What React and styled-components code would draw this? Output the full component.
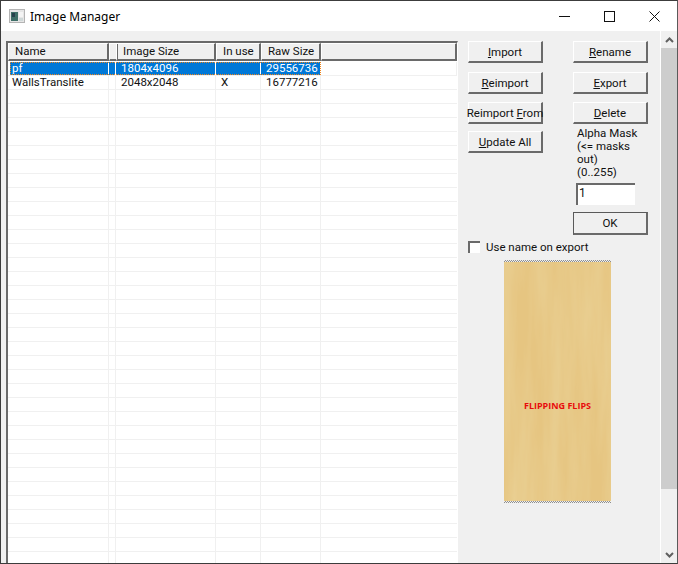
import React from 'react'
import styled, { createGlobalStyle } from 'styled-components'

const UI_FONT = '"Roboto", "Liberation Sans", sans-serif'

const GlobalStyle = createGlobalStyle`
  html, body {
    margin: 0;
    padding: 0;
    background: #f0f0f0;
  }
`

const Window = styled.div`
  width: 678px;
  height: 564px;
  box-sizing: border-box;
  border: 1px solid #3c3c3c;
  border-right-color: #5a5a5a;
  display: flex;
  flex-direction: column;
  overflow: hidden;
  font-family: ${UI_FONT};
  font-size: 11.5px;
  color: #111;
`

const TitleBar = styled.div`
  height: 30px;
  flex: none;
  background: #fff;
  display: flex;
  align-items: center;
  padding-left: 8px;
`

const TitleText = styled.span`
  margin-left: 5px;
  font-family: "Noto Sans", sans-serif;
  font-size: 12px;
  color: #000;
`

const Caption = styled.div`
  margin-left: auto;
  display: flex;
`

const CaptionButton = styled.div`
  width: 45px;
  height: 30px;
  display: flex;
  align-items: center;
  justify-content: center;
`

const Body = styled.div`
  flex: 1;
  min-height: 0;
  display: flex;
  background: #f0f0f0;
`

const ListFrame = styled.div`
  width: 452px;
  margin: 10px 0 0 5px;
  flex: none;
  box-sizing: border-box;
  border-top: 2px solid #6a6a6a;
  border-left: 2px solid #6a6a6a;
  border-right: 1px solid #fff;
  background: #fff;
  overflow: hidden;
`

const COLUMNS = '101px 7px 100px 45px 60px 1fr'

const HeaderRow = styled.div`
  display: grid;
  grid-template-columns: ${COLUMNS};
  height: 18px;
  background: #f0f0f0;
`

const HeaderCell = styled.div`
  box-sizing: border-box;
  border-top: 1px solid #fff;
  border-left: 1px solid #fff;
  border-right: 2px solid #6a6a6a;
  border-bottom: 2px solid #6a6a6a;
  padding-left: 6px;
  line-height: 15px;
  white-space: nowrap;
  overflow: hidden;
`

const Rows = styled.div`
  margin-top: 1px;
`

const Row = styled.div`
  position: relative;
  display: grid;
  grid-template-columns: ${COLUMNS};
  height: 14px;
  box-sizing: border-box;
  border-bottom: 1px solid #f0f0f0;
`

const Cell = styled.div`
  box-sizing: border-box;
  padding-left: 5px;
  line-height: 13px;
  white-space: nowrap;
  border-right: 1px solid ${(p) => (p.$selected ? '#fff' : '#f0f0f0')};
  background: ${(p) => (p.$selected ? '#0078d7' : 'transparent')};
  color: ${(p) => (p.$selected ? '#fff' : '#111')};

  &:first-child {
    margin-left: 2px;
    padding-left: 2px;
  }
  &:last-child {
    border: 0;
    background: transparent;
  }
`

const FocusRing = styled.div`
  position: absolute;
  left: 2px;
  top: 0;
  width: 311px;
  height: 13px;
  box-sizing: border-box;
  border: 1px dotted #f0861c;
  pointer-events: none;
`

const Side = styled.div`
  width: 193px;
  flex: none;
  box-sizing: border-box;
  padding: 10px 0 0 10px;
  display: flex;
  flex-direction: column;
`

const Controls = styled.div`
  display: grid;
  grid-template-columns: 75px 75px;
  column-gap: 30px;
`

const ButtonStack = styled.div`
  display: flex;
  flex-direction: column;
`

const Button = styled.div`
  width: 75px;
  height: ${(p) => (p.$tall ? 23 : 22)}px;
  margin-bottom: ${(p) => p.$gap ?? 8}px;
  box-sizing: border-box;
  background: #f0f0f0;
  border-top: 1px solid ${(p) => (p.$default ? '#5a5a5a' : '#fff')};
  border-left: 1px solid ${(p) => (p.$default ? '#5a5a5a' : '#fff')};
  border-right: 2px solid #6a6a6a;
  border-bottom: 2px solid #6a6a6a;
  display: flex;
  align-items: center;
  justify-content: center;
  white-space: nowrap;
`

const MaskLabel = styled.div`
  margin: 3px 0 0 4px;
  line-height: 13px;
`

const MaskInput = styled.div`
  width: 59px;
  height: 22px;
  margin: 4px 0 7px 3px;
  box-sizing: border-box;
  background: #fff;
  border-top: 2px solid #6a6a6a;
  border-left: 2px solid #6a6a6a;
  padding-left: 1px;
  line-height: 16px;
  font-size: 12px;
`

const CheckRow = styled.div`
  display: flex;
  align-items: center;
  height: 13px;
  margin-top: 5px;
`

const CheckBox = styled.div`
  width: 12px;
  height: 12px;
  box-sizing: border-box;
  background: #fff;
  border-top: 2px solid #6a6a6a;
  border-left: 2px solid #6a6a6a;
  margin-right: 6px;
`

const Preview = styled.div`
  position: relative;
  width: 107px;
  height: 243px;
  margin: 7px 0 0 36px;
  overflow: hidden;
`

const PreviewLabel = styled.span`
  position: absolute;
  left: 0;
  right: 0;
  top: 139px;
  text-align: center;
  font-family: "Open Sans", sans-serif;
  font-size: 9px;
  font-weight: 700;
  color: #e80c0c;
`

const Checker = styled.div`
  position: absolute;
  left: 0;
  right: 0;
  ${(p) => (p.$bottom ? 'bottom: 0;' : 'top: 0;')}
  height: 2px;
  background: repeating-conic-gradient(#8f8f8f 0 25%, #f0f0f0 0 50%) 0 0 / 2px 2px;
`

const ScrollBar = styled.div`
  width: 16px;
  margin-left: auto;
  flex: none;
  border-left: 1px solid #fff;
  display: flex;
  flex-direction: column;
`

const ScrollArrow = styled.div`
  height: 17px;
  flex: none;
  display: flex;
  align-items: center;
  justify-content: center;
`

const ScrollThumb = styled.div`
  height: 441px;
  flex: none;
  background: #cdcdcd;
`

const ScrollTrack = styled.div`
  flex: 1;
`

function AppIcon() {
  return (
    <svg width="16" height="14" viewBox="0 0 16 14">
      <rect x="0.5" y="0.5" width="15" height="13" fill="#e6e6e6" stroke="#b4b4b4" />
      <rect x="2" y="3" width="7" height="9" fill="#3f6f68" />
      <rect x="3" y="4" width="3" height="4" fill="#27414c" />
      <rect x="10" y="3" width="4" height="5" fill="#f4f4f4" />
      <rect x="10" y="9" width="4" height="3" fill="#cfd8d8" />
    </svg>
  )
}

function WoodTexture() {
  return (
    <svg width="107" height="243" viewBox="0 0 107 243" style={{ display: 'block' }}>
      <filter id="wood" x="0" y="0" width="100%" height="100%">
        <feTurbulence type="fractalNoise" baseFrequency="0.07 0.006" numOctaves="4" seed="11" />
        <feColorMatrix
          type="matrix"
          values="0 0 0 0 0.835
                  0 0 0 0 0.675
                  0 0 0 0 0.345
                  0.95 0 0 0 -0.27"
        />
      </filter>
      <rect width="107" height="243" fill="#e6c581" />
      <rect width="107" height="243" filter="url(#wood)" />
    </svg>
  )
}

const columns = ['Name', '', 'Image Size', 'In use', 'Raw Size', '']
const images = [
  { name: 'pf', size: '1804x4096', used: '', raw: '29556736', selected: true },
  { name: 'WallsTranslite', size: '2048x2048', used: 'X', raw: '16777216' },
]
const blankRows = Array.from({ length: 34 }, (_, i) => i)

export default function App() {
  return (
    <>
      <GlobalStyle />
      <Window>
        <TitleBar>
          <AppIcon />
          <TitleText>Image Manager</TitleText>
          <Caption>
            <CaptionButton>
              <svg width="11" height="11" viewBox="0 0 11 11">
                <path d="M0 5.5H11" stroke="#111" />
              </svg>
            </CaptionButton>
            <CaptionButton>
              <svg width="11" height="11" viewBox="0 0 11 11">
                <rect x="0.5" y="0.5" width="10" height="10" fill="none" stroke="#111" />
              </svg>
            </CaptionButton>
            <CaptionButton>
              <svg width="11" height="11" viewBox="0 0 11 11">
                <path d="M0.5 0.5L10.5 10.5M10.5 0.5L0.5 10.5" stroke="#111" />
              </svg>
            </CaptionButton>
          </Caption>
        </TitleBar>
        <Body>
          <ListFrame>
            <HeaderRow>
              {columns.map((c, i) => (
                <HeaderCell key={i}>{c}</HeaderCell>
              ))}
            </HeaderRow>
            <Rows>
              {images.map((img) => (
                <Row key={img.name}>
                  <Cell $selected={img.selected}>{img.name}</Cell>
                  <Cell $selected={img.selected} />
                  <Cell $selected={img.selected}>{img.size}</Cell>
                  <Cell $selected={img.selected}>{img.used}</Cell>
                  <Cell $selected={img.selected}>{img.raw}</Cell>
                  <Cell />
                  {img.selected && <FocusRing />}
                </Row>
              ))}
              {blankRows.map((i) => (
                <Row key={i}>
                  <Cell />
                  <Cell />
                  <Cell />
                  <Cell />
                  <Cell />
                  <Cell />
                </Row>
              ))}
            </Rows>
          </ListFrame>
          <Side>
            <Controls>
              <ButtonStack>
                <Button $gap={9}>
                  <span><u>I</u>mport</span>
                </Button>
                <Button>
                  <span><u>R</u>eimport</span>
                </Button>
                <Button $gap={7}>
                  <span>Reimport <u>F</u>rom</span>
                </Button>
                <Button>
                  <span><u>U</u>pdate All</span>
                </Button>
              </ButtonStack>
              <ButtonStack>
                <Button $gap={9}>
                  <span><u>R</u>ename</span>
                </Button>
                <Button>
                  <span><u>E</u>xport</span>
                </Button>
                <Button $gap={0}>
                  <span><u>D</u>elete</span>
                </Button>
                <MaskLabel>
                  Alpha Mask
                  <br />
                  {'(<= masks out)'}
                  <br />
                  (0..255)
                </MaskLabel>
                <MaskInput>1</MaskInput>
                <Button $tall $default $gap={0}>
                  OK
                </Button>
              </ButtonStack>
            </Controls>
            <CheckRow>
              <CheckBox />
              Use name on export
            </CheckRow>
            <Preview>
              <WoodTexture />
              <Checker />
              <Checker $bottom />
              <PreviewLabel>FLIPPING FLIPS</PreviewLabel>
            </Preview>
          </Side>
          <ScrollBar>
            <ScrollArrow>
              <svg width="9" height="6" viewBox="0 0 9 6">
                <path d="M1 5L4.5 1.5L8 5" fill="none" stroke="#606060" strokeWidth="2" />
              </svg>
            </ScrollArrow>
            <ScrollThumb />
            <ScrollTrack />
            <ScrollArrow>
              <svg width="9" height="6" viewBox="0 0 9 6">
                <path d="M1 1L4.5 4.5L8 1" fill="none" stroke="#606060" strokeWidth="2" />
              </svg>
            </ScrollArrow>
          </ScrollBar>
        </Body>
      </Window>
    </>
  )
}
